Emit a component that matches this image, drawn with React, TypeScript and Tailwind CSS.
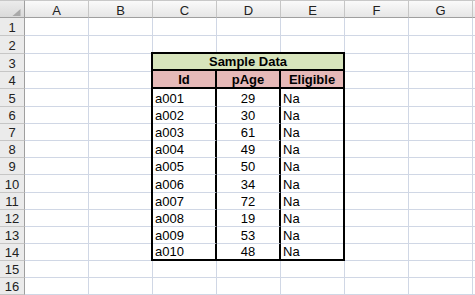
import React from "react";

const cols = ["A", "B", "C", "D", "E", "F", "G"];
const data: [string, number][] = [
  ["a001", 29],
  ["a002", 30],
  ["a003", 61],
  ["a004", 49],
  ["a005", 50],
  ["a006", 34],
  ["a007", 72],
  ["a008", 19],
  ["a009", 53],
  ["a010", 48],
];

export default function App() {
  const cells: React.ReactNode[] = [];

  cells.push(
    <div
      key="corner"
      className="flex items-end justify-end border-t border-r border-b border-t-[#c8c8c8] border-r-[#9f9f9f] border-b-[#9f9f9f] bg-linear-to-b from-[#ececec] to-[#dadada] pr-[3px] pb-[1px]"
    >
      <svg width="9" height="7" viewBox="0 0 9 7">
        <polygon points="8.5,0 8.5,7 0.5,7" fill="#a9a9a9" />
      </svg>
    </div>
  );
  cols.forEach((c) =>
    cells.push(
      <div
        key={"h" + c}
        className="flex items-start justify-center border-t border-r border-b border-t-[#c8c8c8] border-r-[#c6c6c6] border-b-[#9f9f9f] bg-linear-to-b from-[#fafafa] to-[#e6e6e6] pt-[3px] leading-[13px] text-[#222]"
      >
        {c}
      </div>
    )
  );
  cells.push(
    <div
      key="hx"
      className="border-t border-b border-t-[#c8c8c8] border-b-[#9f9f9f] bg-linear-to-b from-[#fafafa] to-[#e6e6e6]"
    />
  );

  for (let r = 1; r <= 16; r++) {
    cells.push(
      <div
        key={"r" + r}
        className="flex items-end justify-center border-r border-b border-r-[#9f9f9f] border-b-[#c6c6c6] bg-[#ebebeb] text-[#222]"
      >
        {r}
      </div>
    );
    for (let c = 0; c < 7; c++) {
      if (r >= 3 && r <= 14 && c >= 2 && c <= 4) continue;
      cells.push(
        <div
          key={"c" + r + "-" + c}
          className="border-r border-b border-[#d0d7e5] bg-white"
        />
      );
    }
    cells.push(
      <div key={"x" + r} className="border-b border-[#d0d7e5] bg-white" />
    );
  }

  const table = (
    <div
      key="table"
      className="col-start-4 col-span-3 row-start-4 row-span-12 -ml-[2px] -mt-[2px] border-2 border-black bg-white grid grid-cols-[64px_64px_1fr] grid-rows-[17px_18px_18px_17px_17px_17px_17px_18px_17px_17px_17px_1fr] text-black"
    >
      <div className="col-span-3 flex items-end justify-center border-b-2 border-black bg-[#d7e4bc] font-bold">
        Sample Data
      </div>
      <div className="flex items-end justify-center border-r-2 border-b-2 border-black bg-[#e6b9b8] font-bold">
        Id
      </div>
      <div className="flex items-end justify-center border-r-2 border-b-2 border-black bg-[#e6b9b8] font-bold">
        pAge
      </div>
      <div className="flex items-end justify-center border-b-2 border-black bg-[#e6b9b8] font-bold">
        Eligible
      </div>
      {data.map(([id, age], i) => {
        const last = i === data.length - 1;
        const rowB = last ? "" : "border-b border-b-[#d0d7e5]";
        return (
          <React.Fragment key={id}>
            <div className={`flex items-end pl-[2px] border-r-2 border-r-black ${rowB}`}>
              {id}
            </div>
            <div className={`flex items-end justify-center border-r-2 border-r-black ${rowB}`}>
              {age}
            </div>
            <div className={`flex items-end pl-[2px] ${rowB}`}>Na</div>
          </React.Fragment>
        );
      })}
    </div>
  );

  return (
    <div className="w-[475px] h-[295px] overflow-hidden bg-white [font-family:'Liberation_Sans',Arial,sans-serif] text-[13px] leading-[15px]">
      <div className="grid grid-cols-[25px_repeat(7,64px)_1fr] grid-rows-[18px_18px_18px_18px_17px_18px_17px_17px_17px_17px_18px_17px_17px_17px_17px_17px_17px] h-[295px]">
        {cells}
        {table}
      </div>
    </div>
  );
}
